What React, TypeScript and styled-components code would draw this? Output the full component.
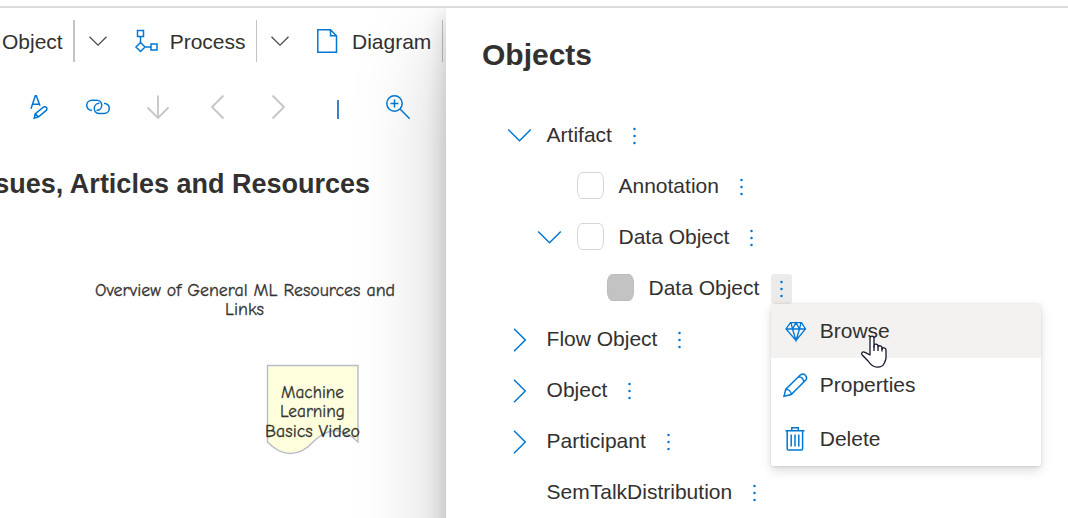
import React from "react";
import styled, { createGlobalStyle } from "styled-components";

const GlobalStyle = createGlobalStyle`
  * { box-sizing: border-box; }
  body { margin: 0; background: #fff; overflow: hidden; }
`;

const Page = styled.div`
  width: 1068px;
  height: 518px;
  display: flex;
  flex-direction: column;
  overflow: hidden;
  color: #323130;
  font: 21px/30px "Liberation Sans", Arial, sans-serif;
`;

const TopEdge = styled.div`
  height: 8px;
  flex: none;
  border-bottom: 2px solid #dcdcdc;
`;

const Body = styled.div`
  flex: 1;
  min-height: 0;
  display: grid;
  grid-template-columns: 446px 622px;
  overflow: hidden;
`;

const Editor = styled.main`
  display: flex;
  flex-direction: column;
  min-width: 0;
  overflow: hidden;
`;

const CommandBar = styled.div`
  display: flex;
  align-items: center;
  flex: none;
  height: 42px;
  margin-top: 12px;
  padding-left: 2px;
`;

const Command = styled.span<{ $width: number }>`
  flex: none;
  width: ${(p) => p.$width}px;
  padding-top: 1px;
  white-space: nowrap;
`;

const Divider = styled.span<{ $thick?: boolean }>`
  flex: none;
  width: ${(p) => (p.$thick ? 2 : 1)}px;
  height: 42px;
  background: #c4c4c4;
`;

const IconSlot = styled.span<{ $width: number; $pad?: number }>`
  flex: none;
  display: flex;
  align-items: center;
  width: ${(p) => p.$width}px;
  padding-left: ${(p) => p.$pad ?? 0}px;
`;

const Icon = styled.svg<{ $color?: string }>`
  display: block;
  flex: none;
  overflow: visible;
  fill: none;
  stroke: ${(p) => p.$color ?? "#0078d4"};
  stroke-width: 1.5;
`;

const ToolRow = styled.div`
  display: flex;
  align-items: center;
  gap: 36px;
  height: 30px;
  flex: none;
  margin-top: 30px;
  padding-left: 26px;
`;

const DiagramTitle = styled.h1`
  width: 370px;
  margin: 46px 0 0;
  display: flex;
  justify-content: flex-end;
  white-space: nowrap;
  font-size: 27px;
  line-height: 32px;
`;

const Canvas = styled.svg`
  display: block;
  width: 446px;
  flex: none;
  font-family: "Comic Sans MS", "Comic Neue", "Open Sans", "Noto Sans", sans-serif;
  font-size: 18px;

  text {
    stroke: #323130;
    stroke-width: 0.3px;
  }
`;

const Panel = styled.aside`
  position: relative;
  height: 700px;
  background: #fff;
  box-shadow: 0 38.4px 86.4px rgba(0, 0, 0, 0.22), 0 7.2px 21.6px rgba(0, 0, 0, 0.18);
  padding: 26px 0 0 36px;
`;

const PanelTitle = styled.h2`
  margin: 0;
  font-size: 30px;
  line-height: 42px;
`;

const Tree = styled.div`
  padding: 33px 0 0 26px;
`;

const Row = styled.div<{ $depth: number }>`
  display: flex;
  align-items: center;
  height: 51px;
  padding-left: ${(p) => p.$depth * 30}px;
  white-space: nowrap;
`;

const Swatch = styled.span<{ $filled?: boolean }>`
  width: 27px;
  height: 27px;
  margin-right: 14.9px;
  border: 1px solid ${(p) => (p.$filled ? "#bdbdbd" : "#d8d6d4")};
  border-radius: 5px / 9px;
  background: ${(p) => (p.$filled ? "#c3c3c3" : "#fff")};
`;

const More = styled.span<{ $open?: boolean }>`
  position: relative;
  display: flex;
  align-items: center;
  justify-content: center;
  width: 21px;
  height: 30px;
  margin: 3px 0 0 11.9px;
  border-radius: 3px;
  background: ${(p) => (p.$open ? "#edebe9" : "transparent")};
`;

const Menu = styled.div`
  position: absolute;
  z-index: 1;
  top: 30px;
  left: 0;
  width: 270px;
  border-radius: 3px;
  overflow: visible;
  background: #fff;
  box-shadow: 0 4.8px 10.8px rgba(0, 0, 0, 0.132), 0 0.9px 2.7px rgba(0, 0, 0, 0.108);
`;

const MenuItem = styled.div<{ $hover?: boolean }>`
  display: flex;
  align-items: center;
  gap: 11.5px;
  height: 54px;
  padding-left: 12px;
  border-radius: ${(p) => (p.$hover ? "3px 3px 0 0" : "0 0 3px 3px")};
  background: ${(p) => (p.$hover ? "#f3f2f1" : "#fff")};
`;

const Pointer = styled.svg`
  position: absolute;
  top: 31px;
  left: 90px;
  overflow: visible;
`;

const SmallChevron = () => (
  <Icon width="18" height="10" $color="#484644">
    <path d="M.5 .8 9 9.2 17.5 .8" strokeWidth="1.2" />
  </Icon>
);

const Dots = () => (
  <svg width="3" height="18" viewBox="0 0 3 18" fill="#0078d4">
    <circle cx="1.5" cy="2" r="1.25" />
    <circle cx="1.5" cy="9" r="1.25" />
    <circle cx="1.5" cy="16" r="1.25" />
  </svg>
);

const TreeChevron = ({ open }: { open: boolean }) => (
  <Icon width="24" height="24">
    <path d={open ? "M.2 6.5 11.5 17.8 22.8 6.5" : "M6 1.7 17.3 13 6 24.3"} />
  </Icon>
);

const Diamond = () => (
  <Icon width="25" height="24">
    <path d="M7.5 3.6h11l4 6.4L13 21.5 3 10Zm-4.5 6.4h19.5M8 3.6 9.5 10 13 21.5 16.5 10 18 3.6M9.5 10 13 3.6 16.5 10" strokeWidth="1.3" />
  </Icon>
);

const Pencil = () => (
  <Icon width="25" height="24">
    <path d="M1 23.2 2.8 16.2 17.5 1.8a3.8 3.8 0 0 1 5.3 5.3L8.2 21.5Zm1.8-7a5.5 5.5 0 0 1 5.4 5.3M15.5 3.8a5 5 0 0 1 5.2 5.3" />
  </Icon>
);

const Trash = () => (
  <Icon width="25" height="24">
    <path d="M2.5 3.8h19M4.2 3.8V22q0 1 1 1h13.4q1 0 1-1V3.8M8.8 3.5V.8h6.5v2.7M8.2 7.5v12M12 7.5v12M15.8 7.5v12" />
  </Icon>
);

const Hand = () => (
  <Pointer width="27" height="34" viewBox="0 0 27 34">
    <path
      d="M9 20V3.2C9 .3 13 .3 13 3.2V12V10.2c.7-1.9 4-1.3 4 .8v.8c.6-1.7 4-1.2 4 .9v1.2c.7-1.7 4-1.2 4 1.2v8c0 2.2-1.2 3.5-1.7 5-1 2.8-3.6 4-7 4-4.6 0-7.3-3.1-9.2-6.1L1 19.7c-1.2-2.2 1-3.6 3-2.3L9 20Z"
      fill="#fff"
      stroke="#15152a"
      strokeWidth="1.3"
      strokeLinejoin="round"
    />
    <path d="M13 10.5V16M17 11.5V16M21 12.7V16.5" stroke="#15152a" strokeWidth="1.3" />
  </Pointer>
);

const nodes = [
  { label: "Artifact", depth: 0, open: true },
  { label: "Annotation", depth: 1, swatch: true },
  { label: "Data Object", depth: 1, open: true, swatch: true },
  { label: "Data Object", depth: 2, swatch: true, selected: true },
  { label: "Flow Object", depth: 0, open: false },
  { label: "Object", depth: 0, open: false },
  { label: "Participant", depth: 0, open: false },
  { label: "SemTalkDistribution", depth: 0 },
];

const ContextMenu = () => (
  <Menu>
    <MenuItem $hover><Diamond />Browse</MenuItem>
    <MenuItem><Pencil />Properties</MenuItem>
    <MenuItem><Trash />Delete</MenuItem>
    <Hand />
  </Menu>
);

export default function App() {
  return (
    <Page>
      <GlobalStyle />
      <TopEdge />
      <Body>
        <Editor>
          <CommandBar>
            <Command $width={71}>Object</Command>
            <Divider $thick />
            <IconSlot $width={60} $pad={14}><SmallChevron /></IconSlot>
            <IconSlot $width={34.7}>
              <Icon width="24" height="24">
                <path d="M2.5 1.5h6v6h-6ZM5.5 7.5v6M5.5 13.5 10 18l-4.5 4.5L1 18ZM10 18h6M16 15h6v6h-6Z" />
              </Icon>
            </IconSlot>
            <Command $width={86.3}>Process</Command>
            <Divider />
            <IconSlot $width={60} $pad={14}><SmallChevron /></IconSlot>
            <IconSlot $width={35}>
              <Icon width="21" height="24">
                <path d="M.8 .8h12.7l6 6v16.4H.8ZM13.5 .8v6h6" />
              </Icon>
            </IconSlot>
            <Command $width={90}>Diagram</Command>
            <Divider />
          </CommandBar>

          <ToolRow>
            <Icon width="24" height="24">
              <path d="M5 13.7 9.3 .8h1L14 10.8M6.5 9.3h6.8M8.2 23.2l.9-4.3 8.6-6.9c2.2-1 4.3 1.3 2.8 3.2L12.6 21.8ZM9.1 18.9l3.5 2.9" />
            </Icon>
            <Icon width="24" height="24">
              <path d="M6 15.5C-1.5 14.5-.5 5.2 6 5.2h4.5c7 0 7 10.2 0 10.2M18 8.2c7.5 1 6.5 10.3 0 10.3h-4.5c-7 0-7-10.2 0-10.2" />
            </Icon>
            <Icon width="24" height="24" $color="#c8c6c4">
              <path d="M12 .5v22.5M1.5 12.5 12 23l10.5-10.5" strokeWidth="1.8" />
            </Icon>
            <Icon width="24" height="24" $color="#c8c6c4">
              <path d="M17.5 .5 6 12l11.5 11.5" strokeWidth="1.8" />
            </Icon>
            <Icon width="24" height="24" $color="#c8c6c4">
              <path d="M6.5 .5 18 12 6.5 23.5" strokeWidth="1.8" />
            </Icon>
            <Icon width="24" height="24" $color="#2874bd">
              <path d="M12 5v19" strokeWidth="1.8" />
            </Icon>
            <Icon width="24" height="24">
              <circle cx="8.5" cy="8.5" r="7.7" />
              <path d="M8.5 4.5v8M4.5 8.5h8M14 14l9.7 9.7" />
            </Icon>
          </ToolRow>

          <DiagramTitle>ssues, Articles and Resources</DiagramTitle>

          <Canvas height="318" viewBox="0 200 446 318" fill="#323130">
            <path d="M267.5 365.5H358V442C341 426 328 428 314 441C298 459 281 456 267.5 442Z" fill="#ffffde" stroke="#b7bcca" strokeWidth="1.4" />
            <text x="95" y="296" textLength="300" lengthAdjust="spacingAndGlyphs">Overview of General ML Resources and</text>
            <text x="225" y="315" textLength="39" lengthAdjust="spacingAndGlyphs">Links</text>
            <text x="281" y="398" textLength="63" lengthAdjust="spacingAndGlyphs">Machine</text>
            <text x="280" y="417" textLength="65" lengthAdjust="spacingAndGlyphs">Learning</text>
            <text x="265" y="437" textLength="95" lengthAdjust="spacingAndGlyphs">Basics Video</text>
          </Canvas>
        </Editor>

        <Panel>
          <PanelTitle>Objects</PanelTitle>
          <Tree>
            {nodes.map((n, i) => (
              <Row key={i} $depth={n.depth}>
                <IconSlot $width={38.6}>
                  {n.open !== undefined && <TreeChevron open={n.open} />}
                </IconSlot>
                {n.swatch && <Swatch $filled={n.selected} />}
                {n.label}
                <More $open={n.selected}>
                  <Dots />
                  {n.selected && <ContextMenu />}
                </More>
              </Row>
            ))}
          </Tree>
        </Panel>
      </Body>
    </Page>
  );
}
